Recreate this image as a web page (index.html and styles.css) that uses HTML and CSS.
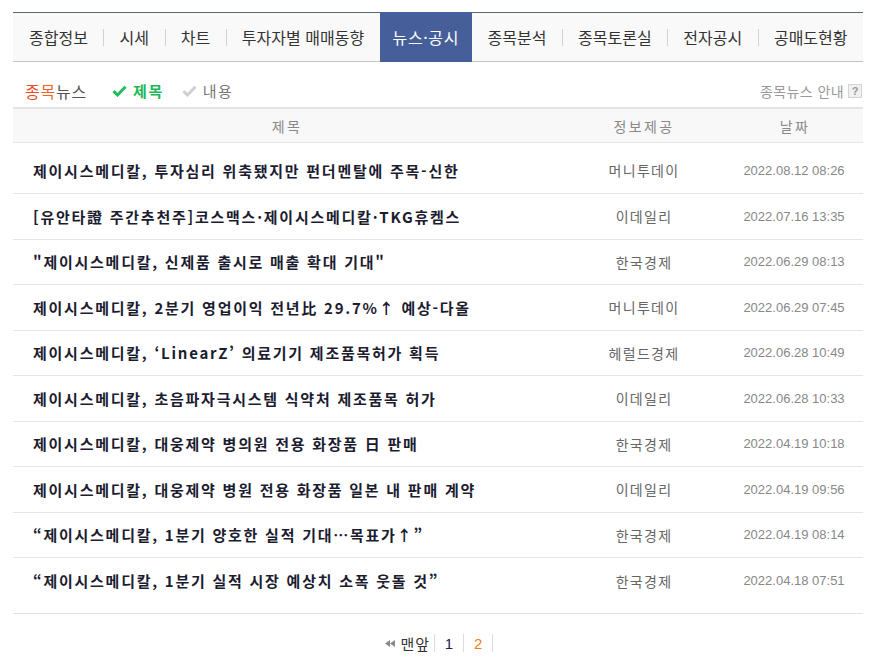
FILE: index.html
```html
<!DOCTYPE html>
<html lang="ko">
<head>
<meta charset="utf-8">
<title>뉴스·공시</title>
<link rel="stylesheet" href="styles.css">
</head>
<body>
<div class="wrap">
  <ul class="tabs">
    <li class="tab">종합정보</li>
    <li class="sep"></li>
    <li class="tab">시세</li>
    <li class="sep"></li>
    <li class="tab">차트</li>
    <li class="sep"></li>
    <li class="tab">투자자별 매매동향</li>
    <li class="tab active">뉴스·공시</li>
    <li class="tab">종목분석</li>
    <li class="sep"></li>
    <li class="tab">종목토론실</li>
    <li class="sep"></li>
    <li class="tab">전자공시</li>
    <li class="sep"></li>
    <li class="tab">공매도현황</li>
  </ul>

  <div class="subhead">
    <div class="subleft">
      <span class="newstitle"><span class="red">종</span><span class="orange">목</span>뉴스</span>
      <span class="opt on"><svg class="chk" width="15" height="12" viewBox="0 0 15 12"><path d="M1.5 6.2 L5.5 10 L13.5 1.8" fill="none" stroke="#1fbd5c" stroke-width="3"/></svg>제목</span>
      <span class="opt off"><svg class="chk" width="15" height="12" viewBox="0 0 15 12"><path d="M1.5 6.2 L5.5 10 L13.5 1.8" fill="none" stroke="#cfcfcf" stroke-width="3"/></svg>내용</span>
    </div>
    <div class="subright">종목뉴스 안내 <span class="qbox">?</span></div>
  </div>

  <div class="table">
    <div class="thead">
      <div class="c-title">제목</div>
      <div class="c-info">정보제공</div>
      <div class="c-date">날짜</div>
    </div>
    <div class="tbody">
      <div class="row first"><div class="c-title t">제이시스메디칼, 투자심리 위축됐지만 펀더멘탈에 주목-신한</div><div class="c-info i">머니투데이</div><div class="c-date d">2022.08.12 08:26</div></div>
      <div class="row"><div class="c-title t">[유안타證 주간추천주]코스맥스·제이시스메디칼·TKG휴켐스</div><div class="c-info i">이데일리</div><div class="c-date d">2022.07.16 13:35</div></div>
      <div class="row"><div class="c-title t">"제이시스메디칼, 신제품 출시로 매출 확대 기대"</div><div class="c-info i">한국경제</div><div class="c-date d">2022.06.29 08:13</div></div>
      <div class="row"><div class="c-title t">제이시스메디칼, 2분기 영업이익 전년比 29.7%↑ 예상-다올</div><div class="c-info i">머니투데이</div><div class="c-date d">2022.06.29 07:45</div></div>
      <div class="row"><div class="c-title t">제이시스메디칼, ‘LinearZ’ 의료기기 제조품목허가 획득</div><div class="c-info i">헤럴드경제</div><div class="c-date d">2022.06.28 10:49</div></div>
      <div class="row"><div class="c-title t">제이시스메디칼, 초음파자극시스템 식약처 제조품목 허가</div><div class="c-info i">이데일리</div><div class="c-date d">2022.06.28 10:33</div></div>
      <div class="row"><div class="c-title t">제이시스메디칼, 대웅제약 병의원 전용 화장품 日 판매</div><div class="c-info i">한국경제</div><div class="c-date d">2022.04.19 10:18</div></div>
      <div class="row"><div class="c-title t">제이시스메디칼, 대웅제약 병원 전용 화장품 일본 내 판매 계약</div><div class="c-info i">이데일리</div><div class="c-date d">2022.04.19 09:56</div></div>
      <div class="row"><div class="c-title t">“제이시스메디칼, 1분기 양호한 실적 기대…목표가↑”</div><div class="c-info i">한국경제</div><div class="c-date d">2022.04.19 08:14</div></div>
      <div class="row last"><div class="c-title t">“제이시스메디칼, 1분기 실적 시장 예상치 소폭 웃돌 것”</div><div class="c-info i">한국경제</div><div class="c-date d">2022.04.18 07:51</div></div>
    </div>
  </div>

  <div class="paging">
    <span class="first-btn"><svg width="10" height="7" viewBox="0 0 10 7"><path d="M5 0 L0 3.5 L5 7 Z M10 0 L5 3.5 L10 7 Z" fill="#8a8a8a"/></svg>맨앞</span>
    <span class="pbar"></span>
    <span class="pnum cur">1</span>
    <span class="pbar"></span>
    <span class="pnum other">2</span>
    <span class="pbar"></span>
  </div>
</div>
</body>
</html>
```

FILE: styles.css
```css
* { box-sizing: border-box; }
html, body { margin: 0; padding: 0; background: #fff; }
body {
  font-family: "Noto Sans CJK KR", "Noto Sans", sans-serif;
  color: #333;
}
.wrap {
  width: 878px;
  padding: 12px 15px 0 13px;
}

/* tabs */
.tabs {
  list-style: none;
  margin: 0;
  padding: 0;
  display: flex;
  align-items: center;
  height: 50px;
  border-top: 1px solid #5e6672;
  border-bottom: 1px solid #c6c6c6;
  background: #f9f9f9;
}
.tab {
  padding: 0 15.5px;
  font-size: 16px;
  line-height: 48px;
  color: #333;
  white-space: nowrap;
}
.tab:first-child { padding-left: 16px; }
.tab.active {
  background: #465f9a;
  color: #fff;
  align-self: stretch;
  margin: -1px 0;
  line-height: 50px;
  padding: 0 13px 0 13px;
  letter-spacing: 0.6px;
}
.sep {
  width: 1px;
  height: 17px;
  background: #d2d2d2;
}

/* sub header */
.subhead {
  height: 45px;
  padding-top: 19px;
  display: flex;
  justify-content: space-between;
  align-items: flex-start;
}
.subleft { display: flex; align-items: center; padding-left: 12px; height: 20px; }
.newstitle { font-size: 16px; color: #555; line-height: 20px; letter-spacing: 0.8px; }
.red { color: #ef4a26; }
.orange { color: #f5652b; }
.opt { display: flex; align-items: center; font-size: 15px; line-height: 20px; letter-spacing: 1.5px; }
.opt.on { margin-left: 25px; color: #20b85a; font-weight: 700; }
.opt.off { margin-left: 18px; color: #777; }
.chk { margin-right: 6px; }
.subright {
  display: flex;
  align-items: center;
  height: 20px;
  font-size: 14px;
  color: #999;
  padding-right: 1px;
  letter-spacing: 0.4px;
}
.qbox {
  display: inline-block;
  width: 14px;
  height: 14px;
  margin-left: 4px;
  border: 1px solid #d4d4d4;
  background: #f1f1f1;
  color: #999;
  font-family: "Liberation Sans", sans-serif;
  font-size: 11px;
  font-weight: 700;
  line-height: 12px;
  text-align: center;
  letter-spacing: 0;
}

/* table */
.table { width: 850px; }
.thead {
  display: flex;
  height: 36px;
  border-top: 2px solid #e3e3e3;
  border-bottom: 1px solid #e5e5e5;
  background: #f8f8f8;
  align-items: center;
  font-size: 14px;
  color: #888;
  letter-spacing: 2.4px;
}
.c-title { width: 548px; }
.c-info { width: 166px; text-align: center; }
.c-date { width: 136px; text-align: center; }
.thead .c-title { text-align: center; }

.tbody { border-bottom: 1px solid #e2e2e2; }
.row {
  display: flex;
  align-items: center;
  height: 45.5px;
  border-bottom: 1px solid #e5e5e5;
}
.row.first { height: 51px; padding-top: 4px; }
.row.last { height: 55px; padding-bottom: 10px; border-bottom: none; }
.t {
  padding-left: 20px;
  font-size: 15px;
  font-weight: 700;
  color: #1c1c30;
  letter-spacing: 1.75px;
  white-space: nowrap;
}
.i { font-size: 14px; color: #666; letter-spacing: 1.3px; }
.d {
  font-family: "Liberation Sans", sans-serif;
  font-size: 13px;
  color: #888;
  padding-right: 2px;
}

/* paging */
.paging {
  display: flex;
  justify-content: center;
  align-items: center;
  height: 58px;
  padding-left: 2px;
}
.first-btn {
  display: flex;
  align-items: center;
  font-size: 15px;
  color: #333;
  letter-spacing: 0.8px;
  margin-right: 4px;
}
.first-btn svg { margin-right: 6px; }
.pbar { width: 1px; height: 18px; background: #dcdcdc; }
.pnum {
  font-family: "Liberation Sans", sans-serif;
  font-size: 15px;
  padding: 0 10px;
}
.cur { color: #1e1e4e; }
.other { color: #f47c20; }
```
